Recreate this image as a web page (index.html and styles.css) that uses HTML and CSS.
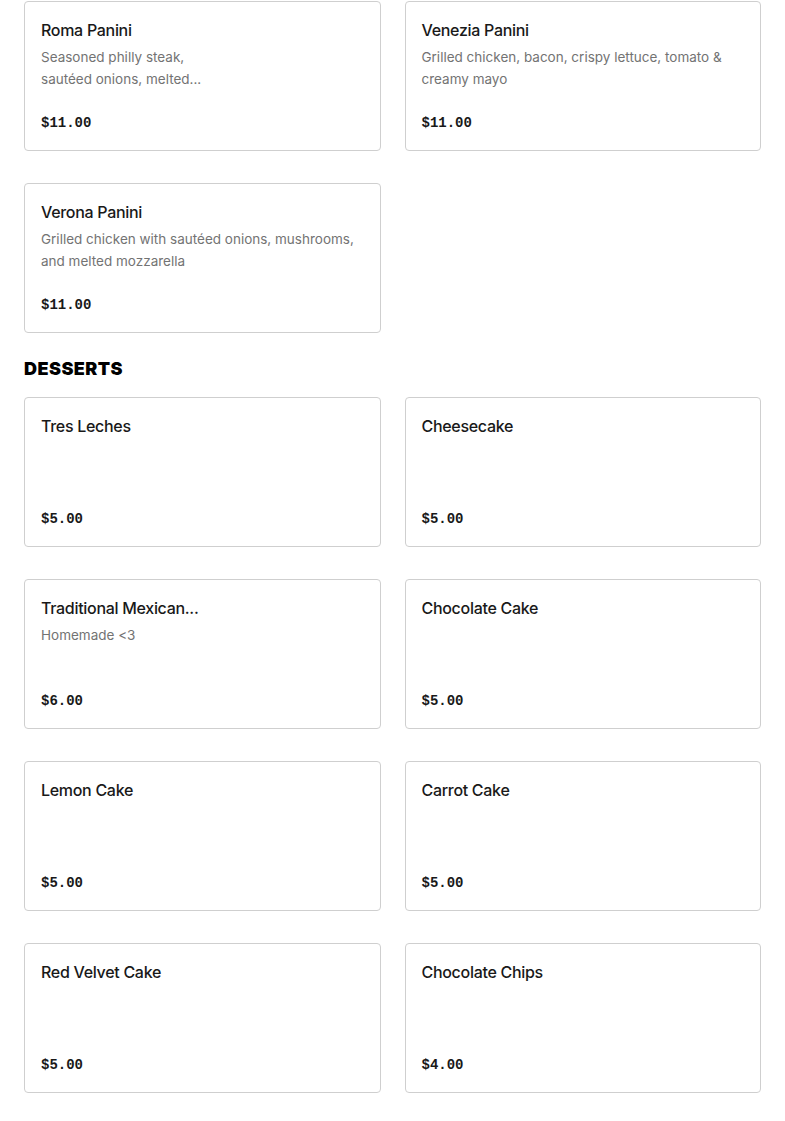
FILE: index.html
```html
<!DOCTYPE html>
<html>
<head>
<meta charset="utf-8">
<link rel="stylesheet" href="styles.css">
</head>
<body>
<div class="page">
  <div class="grid">
    <div class="card">
      <div class="title">Roma Panini</div>
      <div class="desc">Seasoned philly steak,<br>sautéed onions, melted...</div>
      <div class="price">$11.00</div>
    </div>
    <div class="card">
      <div class="title">Venezia Panini</div>
      <div class="desc">Grilled chicken, bacon, crispy lettuce, tomato &amp; creamy mayo</div>
      <div class="price">$11.00</div>
    </div>
    <div class="card">
      <div class="title">Verona Panini</div>
      <div class="desc">Grilled chicken with sautéed onions, mushrooms, and melted mozzarella</div>
      <div class="price">$11.00</div>
    </div>
  </div>
  <h2 class="section">DESSERTS</h2>
  <div class="grid">
    <div class="card">
      <div class="title">Tres Leches</div>
      <div class="price">$5.00</div>
    </div>
    <div class="card">
      <div class="title">Cheesecake</div>
      <div class="price">$5.00</div>
    </div>
    <div class="card">
      <div class="title">Traditional Mexican...</div>
      <div class="desc">Homemade &lt;3</div>
      <div class="price">$6.00</div>
    </div>
    <div class="card">
      <div class="title">Chocolate Cake</div>
      <div class="price">$5.00</div>
    </div>
    <div class="card">
      <div class="title">Lemon Cake</div>
      <div class="price">$5.00</div>
    </div>
    <div class="card">
      <div class="title">Carrot Cake</div>
      <div class="price">$5.00</div>
    </div>
    <div class="card">
      <div class="title">Red Velvet Cake</div>
      <div class="price">$5.00</div>
    </div>
    <div class="card">
      <div class="title">Chocolate Chips</div>
      <div class="price">$4.00</div>
    </div>
  </div>
</div>
</body>
</html>
```

FILE: styles.css
```css
html, body {
  margin: 0;
  padding: 0;
  background: #ffffff;
}
.page {
  padding: 1px 24px 0 24px;
  font-family: "Inter", "Noto Sans", sans-serif;
  color: #191919;
}
.grid {
  display: grid;
  grid-template-columns: 1fr 1fr;
  column-gap: 24px;
  row-gap: 32px;
}
.card {
  box-sizing: border-box;
  height: 150px;
  border: 1px solid #cfcfcf;
  border-radius: 4px;
  padding: 16px;
  display: flex;
  flex-direction: column;
}
.title {
  font-size: 16px;
  font-weight: 500;
  line-height: 24px;
  letter-spacing: -0.3px;
  color: #191919;
}
.desc {
  margin-top: 4px;
  font-size: 13.5px;
  line-height: 22px;
  color: #737373;
}
.price {
  margin-top: auto;
  font-family: "Liberation Mono", monospace;
  font-weight: 700;
  font-size: 14px;
  line-height: 22px;
  color: #191919;
}
.section {
  margin: 24px 0 16px 0;
  font-family: "Inter", sans-serif;
  font-weight: 900;
  font-size: 18px;
  line-height: 24px;
  letter-spacing: 0.45px;
  color: #000;
}
```
